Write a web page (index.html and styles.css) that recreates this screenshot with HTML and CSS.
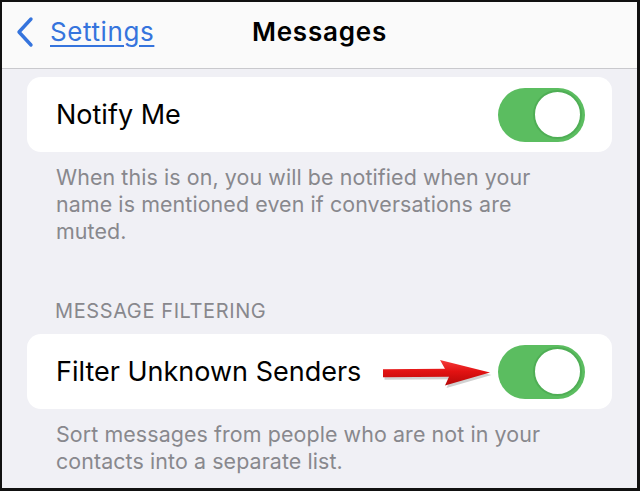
FILE: index.html
```html
<!DOCTYPE html>
<html lang="en">
<head>
<meta charset="utf-8">
<title>Messages</title>
<link rel="stylesheet" href="styles.css">
</head>
<body>
<div class="frame">
  <header class="nav">
    <a class="back" href="#">
      <svg class="chevron" width="20" height="32" viewBox="0 0 20 32" aria-hidden="true">
        <path d="M16 3 L4 16 L16 29" fill="none" stroke="#3574dd" stroke-width="3.4" stroke-linecap="round" stroke-linejoin="round"/>
      </svg>
      <span class="back-label">Settings</span>
    </a>
    <h1 class="title">Messages</h1>
  </header>

  <main class="content">
    <section class="group first">
      <div class="card">
        <span class="label">Notify Me</span>
        <span class="toggle on"><span class="knob"></span></span>
      </div>
      <p class="footer">When this is on, you will be notified when your name is mentioned even if conversations are muted.</p>
    </section>

    <section class="group">
      <h2 class="header">MESSAGE FILTERING</h2>
      <div class="card">
        <span class="label">Filter Unknown Senders</span>
        <svg class="arrow" width="114" height="34" viewBox="0 0 114 34" aria-hidden="true">
          <defs>
            <linearGradient id="shaft" x1="0" y1="0" x2="0" y2="1">
              <stop offset="0" stop-color="#f53b3b"/>
              <stop offset="0.45" stop-color="#e21212"/>
              <stop offset="1" stop-color="#b50909"/>
            </linearGradient>
          </defs>
          <path d="M1 13.3 L63 12.8 L58 4 L108 16.5 L63 29.5 L67 20.7 L1 21.2 Z" fill="#8c8c8c" opacity="0.4" transform="translate(1.5 2.5)"/>
          <path d="M1 13.3 L63 12.8 L58 4 L108 16.5 L63 29.5 L67 20.7 L1 21.2 Z" fill="url(#shaft)"/>
        </svg>
        <span class="toggle on"><span class="knob"></span></span>
      </div>
      <p class="footer">Sort messages from people who are not in your contacts into a separate list.</p>
    </section>
  </main>
</div>
</body>
</html>
```

FILE: styles.css
```css
* { box-sizing: border-box; }

html, body {
  margin: 0;
  padding: 0;
  background: #000;
}

.frame {
  width: 640px;
  height: 491px;
  border-style: solid;
  border-color: #111;
  border-width: 2px 3px 3px 2px;
  background: #f0f0f5;
  overflow: hidden;
  font-family: Inter, "Liberation Sans", Arial, sans-serif;
  display: flex;
  flex-direction: column;
}

.nav {
  height: 67px;
  flex: none;
  background: #fafafa;
  border-bottom: 1px solid #c9c9cd;
  display: grid;
  grid-template-columns: 1fr auto 1fr;
  align-items: center;
  padding-bottom: 8px;
}

.back {
  grid-column: 1;
  justify-self: start;
  display: flex;
  align-items: center;
  gap: 15px;
  padding-left: 13px;
  color: #3574dd;
  text-decoration: none;
}

.chevron { display: block; margin-top: 1px; }

.back-label {
  font-size: 26px;
  text-decoration: underline;
  text-decoration-thickness: 1.5px;
  text-underline-offset: 4px;
  letter-spacing: 0.6px;
}

.title {
  grid-column: 2;
  margin: 0;
  font-size: 26px;
  font-weight: 600;
  color: #000;
  letter-spacing: 0.8px;
}

.content {
  padding: 8px 25px 0 25px;
}

.group { margin: 0; }

.card {
  background: #fff;
  border-radius: 14px;
  height: 75px;
  display: flex;
  align-items: center;
  padding: 0 27px 0 29px;
}

.label {
  font-size: 27px;
  color: #000;
  letter-spacing: 0px;
}

.arrow {
  margin-left: auto;
  margin-right: 2px;
  margin-top: 2px;
  flex: none;
  display: block;
}

.label + .toggle { margin-left: auto; }

.toggle {
  flex: none;
  width: 87px;
  height: 54px;
  border-radius: 27px;
  background: #5bbd60;
  display: flex;
  align-items: center;
  justify-content: flex-end;
  padding-right: 3px;
}

.knob {
  width: 49px;
  height: 49px;
  border-radius: 50%;
  background: #fff;
  border: 2px solid #4fae55;
}

.footer {
  margin: 12px 0 0 0;
  padding: 0 48px 0 29px;
  font-size: 21.4px;
  line-height: 27px;
  color: #88888d;
  letter-spacing: 0.1px;
}

.header {
  margin: 54px 0 11px 0;
  padding-left: 28px;
  font-size: 20px;
  font-weight: 400;
  line-height: 24px;
  color: #88888d;
  letter-spacing: 0.6px;
}
```
